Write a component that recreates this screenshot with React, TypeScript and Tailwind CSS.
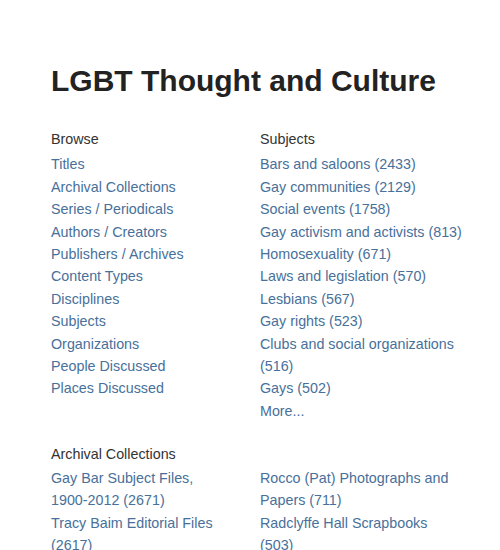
import React from "react";

const browse = [
  "Titles",
  "Archival Collections",
  "Series / Periodicals",
  "Authors / Creators",
  "Publishers / Archives",
  "Content Types",
  "Disciplines",
  "Subjects",
  "Organizations",
  "People Discussed",
  "Places Discussed",
];

const subjects = [
  "Bars and saloons (2433)",
  "Gay communities (2129)",
  "Social events (1758)",
  "Gay activism and activists (813)",
  "Homosexuality (671)",
  "Laws and legislation (570)",
  "Lesbians (567)",
  "Gay rights (523)",
  "Clubs and social organizations (516)",
  "Gays (502)",
  "More...",
];

function LinkList({ items, className = "mt-[3px]" }: { items: React.ReactNode[]; className?: string }) {
  return (
    <ul className={className}>
      {items.map((item, i) => (
        <li key={i}>
          <a href="#" className="text-[#48709a] hover:underline">
            {item}
          </a>
        </li>
      ))}
    </ul>
  );
}

export default function App() {
  return (
    <div
      className="min-h-[550px] bg-white pl-[51px] pt-[63px] text-[14.3px] leading-[22.4px]"
      style={{ fontFamily: '"Liberation Sans", Arial, sans-serif' }}
    >
      <h1 className="text-[30px] font-bold leading-[1.2] text-[#222]">LGBT Thought and Culture</h1>

      <div className="mt-[29px] grid w-[418px] grid-cols-[209px_209px]">
        <div>
          <h2 className="text-[#333]">Browse</h2>
          <LinkList items={browse} />
        </div>
        <div>
          <h2 className="text-[#333]">Subjects</h2>
          <LinkList items={subjects} />
        </div>
      </div>

      <div className="mt-[21px]">
        <h2 className="text-[#333]">Archival Collections</h2>
        <div className="grid w-[418px] grid-cols-[209px_209px]">
          <LinkList
            className="mt-[1px] pr-[18px]"
            items={[
              <>
                Gay Bar Subject Files, <span className="whitespace-nowrap">1900-2012</span> (2671)
              </>,
              "Tracy Baim Editorial Files (2617)",
            ]}
          />
          <LinkList
            className="mt-[1px] pr-[18px]"
            items={["Rocco (Pat) Photographs and Papers (711)", "Radclyffe Hall Scrapbooks (503)"]}
          />
        </div>
      </div>
    </div>
  );
}
